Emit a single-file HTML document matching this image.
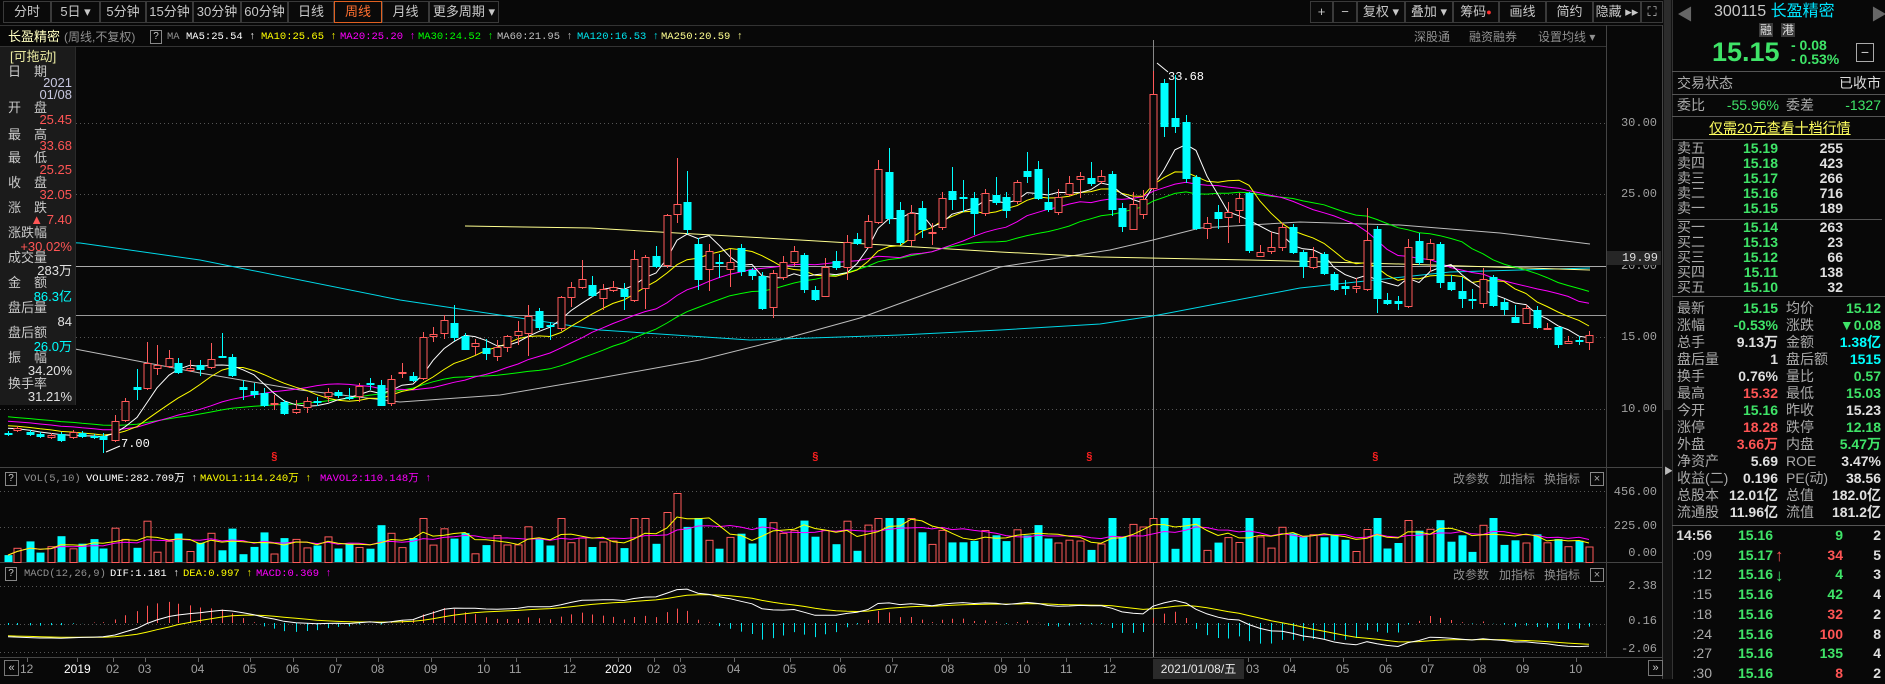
<!DOCTYPE html>
<html><head><meta charset="utf-8">
<style>
*{margin:0;padding:0;box-sizing:border-box}
body{width:1885px;height:679px;background:#080808;overflow:hidden;position:relative;font-family:"Liberation Sans","Noto Sans CJK SC",sans-serif;color:#c8c8c8}
.a{position:absolute;white-space:nowrap;line-height:16px}
.m{font-family:"Liberation Mono","Noto Sans CJK SC",monospace}
.btn{position:absolute;top:1px;height:22px;border:1px solid #3a3a3a;font-size:13px;line-height:20px;text-align:center;color:#c8c8c8;background:#0a0a0a}
.lp{font-size:13px}
.r{color:#ff5555}.g{color:#3fe468}.w{color:#e0e0e0}.c{color:#00ffff}.y{color:#ffff00}
.rp{font-size:14px}
.hl{position:absolute;height:1px;background:#555}
</style></head><body>
<svg id="cv" width="1885" height="679" style="position:absolute;left:0;top:0"></svg>

<!-- toolbar -->
<div class="btn" style="left:3px;width:48px">分时</div>
<div class="btn" style="left:51px;width:49px">5日 ▾</div>
<div class="btn" style="left:100px;width:46px">5分钟</div>
<div class="btn" style="left:146px;width:47px">15分钟</div>
<div class="btn" style="left:193px;width:48px">30分钟</div>
<div class="btn" style="left:241px;width:47px">60分钟</div>
<div class="btn" style="left:288px;width:46px">日线</div>
<div class="btn" style="left:334px;width:48px;border-color:#e06020;color:#ff7030">周线</div>
<div class="btn" style="left:382px;width:47px">月线</div>
<div class="btn" style="left:429px;width:70px">更多周期 ▾</div>

<div class="btn" style="left:1310px;width:23px">+</div>
<div class="btn" style="left:1333px;width:24px">−</div>
<div class="btn" style="left:1357px;width:48px">复权 ▾</div>
<div class="btn" style="left:1405px;width:48px">叠加 ▾</div>
<div class="btn" style="left:1453px;width:46px">筹码<span style="color:#ff3030;font-size:9px;vertical-align:top">●</span></div>
<div class="btn" style="left:1499px;width:47px">画线</div>
<div class="btn" style="left:1546px;width:47px">简约</div>
<div class="btn" style="left:1593px;width:48px">隐藏 ▸▸</div>
<div class="btn" style="left:1641px;width:22px">⛶</div>

<!-- info row -->
<div class="a" style="left:8px;top:29px;font-size:13px;color:#ffffc0">长盈精密</div>
<div class="a" style="left:64px;top:29px;font-size:12px;color:#909090">(周线,不复权)</div>
<div class="a" style="left:150px;top:30px;width:12px;height:14px;border:1px solid #888;font-size:10px;line-height:12px;text-align:center;color:#ccc">?</div>
<div class="a m" style="left:167px;top:29px;font-size:10.5px;color:#909090">MA</div>
<div class="a m" style="left:186px;top:29px;font-size:10.5px;color:#fff">MA5:25.54 ↑</div>
<div class="a m" style="left:261px;top:29px;font-size:10.5px;color:#ffff00">MA10:25.65 ↑</div>
<div class="a m" style="left:340px;top:29px;font-size:10.5px;color:#ff00ff">MA20:25.20 ↑</div>
<div class="a m" style="left:418px;top:29px;font-size:10.5px;color:#00ff00">MA30:24.52 ↑</div>
<div class="a m" style="left:497px;top:29px;font-size:10.5px;color:#c0c0c0">MA60:21.95 ↑</div>
<div class="a m" style="left:577px;top:29px;font-size:10.5px;color:#00e5ee">MA120:16.53 ↑</div>
<div class="a m" style="left:661px;top:29px;font-size:10.5px;color:#ffff90">MA250:20.59 ↑</div>
<div class="a" style="left:1414px;top:29px;font-size:12px;color:#909090">深股通</div>
<div class="a" style="left:1469px;top:29px;font-size:12px;color:#909090">融资融券</div>
<div class="a" style="left:1538px;top:29px;font-size:12px;color:#909090">设置均线 ▾</div>

<!-- left info panel -->
<div class="a" style="left:0;top:47px;width:76px;height:358px;background:#1b1b1b;border-right:1px solid #2a2a2a"></div>
<div class="a lp" style="left:10px;top:49px;color:#e8e8a0">[可拖动]</div>
<div class="a lp" style="left:8px;top:64px">日　期</div>
<div class="a lp" style="right:1813px;top:75px;color:#c8c8e0">2021</div>
<div class="a lp" style="right:1813px;top:87px;color:#c8c8e0">01/08</div>
<div class="a lp" style="left:8px;top:100px">开　盘</div>
<div class="a lp r" style="right:1813px;top:112px">25.45</div>
<div class="a lp" style="left:8px;top:127px">最　高</div>
<div class="a lp r" style="right:1813px;top:138px">33.68</div>
<div class="a lp" style="left:8px;top:150px">最　低</div>
<div class="a lp r" style="right:1813px;top:162px">25.25</div>
<div class="a lp" style="left:8px;top:175px">收　盘</div>
<div class="a lp r" style="right:1813px;top:187px">32.05</div>
<div class="a lp" style="left:8px;top:200px">涨　跌</div>
<div class="a lp r" style="right:1813px;top:212px">▲ 7.40</div>
<div class="a lp" style="left:8px;top:225px">涨跌幅</div>
<div class="a lp r" style="right:1813px;top:239px">+30.02%</div>
<div class="a lp" style="left:8px;top:250px">成交量</div>
<div class="a lp w" style="right:1813px;top:263px">283万</div>
<div class="a lp" style="left:8px;top:275px">金　额</div>
<div class="a lp c" style="right:1813px;top:289px">86.3亿</div>
<div class="a lp" style="left:8px;top:300px">盘后量</div>
<div class="a lp w" style="right:1813px;top:314px">84</div>
<div class="a lp" style="left:8px;top:325px">盘后额</div>
<div class="a lp c" style="right:1813px;top:339px">26.0万</div>
<div class="a lp" style="left:8px;top:350px">振　幅</div>
<div class="a lp w" style="right:1813px;top:363px">34.20%</div>
<div class="a lp" style="left:8px;top:376px">换手率</div>
<div class="a lp w" style="right:1813px;top:389px">31.21%</div>

<!-- chart labels -->
<div class="a m" style="left:1168px;top:69px;font-size:12px;color:#fff">33.68</div>
<div class="a m" style="left:121px;top:436px;font-size:12px;color:#fff">7.00</div>
<div class="a m" style="left:271px;top:450px;font-size:11px;color:#ff2020;font-weight:bold">§</div>
<div class="a m" style="left:812px;top:450px;font-size:11px;color:#ff2020;font-weight:bold">§</div>
<div class="a m" style="left:1086px;top:450px;font-size:11px;color:#ff2020;font-weight:bold">§</div>
<div class="a m" style="left:1372px;top:450px;font-size:11px;color:#ff2020;font-weight:bold">§</div>

<!-- price axis -->
<div class="a m" style="right:228px;top:115px;font-size:12px;color:#a0a0a0">30.00</div>
<div class="a m" style="right:228px;top:186px;font-size:12px;color:#a0a0a0">25.00</div>
<div class="a m" style="right:228px;top:258px;font-size:12px;color:#a0a0a0">20.00</div>
<div class="a m" style="left:1607px;top:251px;width:54px;height:14px;background:#262626;font-size:12px;line-height:14px;text-align:right;padding-right:3px;color:#e0e0e0">19.99</div>
<div class="a m" style="right:228px;top:329px;font-size:12px;color:#a0a0a0">15.00</div>
<div class="a m" style="right:228px;top:401px;font-size:12px;color:#a0a0a0">10.00</div>
<div class="a m" style="right:228px;top:484px;font-size:12px;color:#a0a0a0">456.00</div>
<div class="a m" style="right:228px;top:518px;font-size:12px;color:#a0a0a0">225.00</div>
<div class="a m" style="right:228px;top:545px;font-size:12px;color:#a0a0a0">0.00</div>
<div class="a m" style="right:228px;top:578px;font-size:12px;color:#a0a0a0">2.38</div>
<div class="a m" style="right:228px;top:613px;font-size:12px;color:#a0a0a0">0.16</div>
<div class="a m" style="right:228px;top:641px;font-size:12px;color:#a0a0a0">-2.06</div>

<!-- volume header -->
<div class="a" style="left:5px;top:472px;width:12px;height:14px;border:1px solid #888;font-size:10px;line-height:12px;text-align:center;color:#ccc">?</div>
<div class="a m" style="left:24px;top:471px;font-size:10.5px;color:#909090">VOL(5,10)</div>
<div class="a m" style="left:86px;top:471px;font-size:10.5px;color:#fff">VOLUME:282.709万 ↑</div>
<div class="a m" style="left:200px;top:471px;font-size:10.5px;color:#ffff00">MAVOL1:114.240万 ↑</div>
<div class="a m" style="left:320px;top:471px;font-size:10.5px;color:#ff00ff">MAVOL2:110.148万 ↑</div>
<div class="a" style="left:1453px;top:471px;font-size:12px;color:#909090">改参数</div>
<div class="a" style="left:1499px;top:471px;font-size:12px;color:#909090">加指标</div>
<div class="a" style="left:1544px;top:471px;font-size:12px;color:#909090">换指标</div>
<div class="a" style="left:1590px;top:472px;width:14px;height:14px;border:1px solid #888;font-size:11px;line-height:12px;text-align:center;color:#aaa">×</div>
<!-- macd header -->
<div class="a" style="left:5px;top:567px;width:12px;height:14px;border:1px solid #888;font-size:10px;line-height:12px;text-align:center;color:#ccc">?</div>
<div class="a m" style="left:24px;top:566px;font-size:10.5px;color:#909090">MACD(12,26,9)</div>
<div class="a m" style="left:110px;top:566px;font-size:10.5px;color:#fff">DIF:1.181 ↑</div>
<div class="a m" style="left:183px;top:566px;font-size:10.5px;color:#ffff00">DEA:0.997 ↑</div>
<div class="a m" style="left:256px;top:566px;font-size:10.5px;color:#ff00ff">MACD:0.369 ↑</div>
<div class="a" style="left:1453px;top:567px;font-size:12px;color:#909090">改参数</div>
<div class="a" style="left:1499px;top:567px;font-size:12px;color:#909090">加指标</div>
<div class="a" style="left:1544px;top:567px;font-size:12px;color:#909090">换指标</div>
<div class="a" style="left:1590px;top:568px;width:14px;height:14px;border:1px solid #888;font-size:11px;line-height:12px;text-align:center;color:#aaa">×</div>

<!-- date axis -->
<div class="a" style="left:4px;top:660px;width:15px;height:16px;border:1px solid #777;font-size:11px;line-height:14px;text-align:center;color:#ccc">«</div>
<div class="a" style="left:1648px;top:660px;width:15px;height:16px;border:1px solid #777;font-size:11px;line-height:14px;text-align:center;color:#ccc">»</div>
<div class="a" style="left:20px;top:661px;font-size:12px;color:#a0a0a0">12</div>
<div class="a" style="left:64px;top:661px;font-size:12px;color:#fff">2019</div>
<div class="a" style="left:106px;top:661px;font-size:12px;color:#a0a0a0">02</div>
<div class="a" style="left:138px;top:661px;font-size:12px;color:#a0a0a0">03</div>
<div class="a" style="left:191px;top:661px;font-size:12px;color:#a0a0a0">04</div>
<div class="a" style="left:243px;top:661px;font-size:12px;color:#a0a0a0">05</div>
<div class="a" style="left:286px;top:661px;font-size:12px;color:#a0a0a0">06</div>
<div class="a" style="left:329px;top:661px;font-size:12px;color:#a0a0a0">07</div>
<div class="a" style="left:371px;top:661px;font-size:12px;color:#a0a0a0">08</div>
<div class="a" style="left:424px;top:661px;font-size:12px;color:#a0a0a0">09</div>
<div class="a" style="left:477px;top:661px;font-size:12px;color:#a0a0a0">10</div>
<div class="a" style="left:509px;top:661px;font-size:12px;color:#a0a0a0">11</div>
<div class="a" style="left:563px;top:661px;font-size:12px;color:#a0a0a0">12</div>
<div class="a" style="left:605px;top:661px;font-size:12px;color:#fff">2020</div>
<div class="a" style="left:647px;top:661px;font-size:12px;color:#a0a0a0">02</div>
<div class="a" style="left:673px;top:661px;font-size:12px;color:#a0a0a0">03</div>
<div class="a" style="left:727px;top:661px;font-size:12px;color:#a0a0a0">04</div>
<div class="a" style="left:783px;top:661px;font-size:12px;color:#a0a0a0">05</div>
<div class="a" style="left:833px;top:661px;font-size:12px;color:#a0a0a0">06</div>
<div class="a" style="left:885px;top:661px;font-size:12px;color:#a0a0a0">07</div>
<div class="a" style="left:941px;top:661px;font-size:12px;color:#a0a0a0">08</div>
<div class="a" style="left:994px;top:661px;font-size:12px;color:#a0a0a0">09</div>
<div class="a" style="left:1017px;top:661px;font-size:12px;color:#a0a0a0">10</div>
<div class="a" style="left:1060px;top:661px;font-size:12px;color:#a0a0a0">11</div>
<div class="a" style="left:1103px;top:661px;font-size:12px;color:#a0a0a0">12</div>
<div class="a" style="left:1153px;top:659px;width:91px;height:20px;background:#2a2a2a;font-size:12px;line-height:20px;text-align:center;color:#e8e8e8">2021/01/08/五</div>
<div class="a" style="left:1246px;top:661px;font-size:12px;color:#a0a0a0">03</div>
<div class="a" style="left:1283px;top:661px;font-size:12px;color:#a0a0a0">04</div>
<div class="a" style="left:1336px;top:661px;font-size:12px;color:#a0a0a0">05</div>
<div class="a" style="left:1379px;top:661px;font-size:12px;color:#a0a0a0">06</div>
<div class="a" style="left:1421px;top:661px;font-size:12px;color:#a0a0a0">07</div>
<div class="a" style="left:1473px;top:661px;font-size:12px;color:#a0a0a0">08</div>
<div class="a" style="left:1516px;top:661px;font-size:12px;color:#a0a0a0">09</div>
<div class="a" style="left:1569px;top:661px;font-size:12px;color:#a0a0a0">10</div>

<!-- scrollbar -->
<div class="a" style="left:1663px;top:0;width:9px;height:679px;background:#121212"></div>
<div class="a" style="left:1664px;top:0;width:7px;height:410px;background:#2c2c2c"></div>
<div class="a" style="left:1664px;top:463px;font-size:9px;color:#bbb">▶</div>

<!-- right panel -->
<div class="a" style="left:1672px;top:0;width:1px;height:679px;background:#333"></div>
<div class="a" style="left:1677px;top:8px;font-size:16px;color:#666">◀</div>
<div class="a" style="left:1871px;top:8px;font-size:16px;color:#666">▶</div>
<div class="a" style="left:1714px;top:4px;font-size:16px;color:#c8c8c8">300115 <span style="color:#00e5ff">长盈精密</span></div>
<div class="a" style="left:1759px;top:23px;width:14px;height:14px;background:#3a3a3a;font-size:12px;line-height:14px;text-align:center;color:#ddd">融</div>
<div class="a" style="left:1781px;top:23px;width:14px;height:14px;background:#3a3a3a;font-size:12px;line-height:14px;text-align:center;color:#ddd">港</div>
<div class="a g" style="left:1712px;top:39px;font-size:27px;line-height:26px;font-weight:bold">15.15</div>
<div class="a g" style="left:1791px;top:37px;font-size:14px;font-weight:bold">- 0.08</div>
<div class="a g" style="left:1791px;top:51px;font-size:14px;font-weight:bold">- 0.53%</div>
<div class="a" style="left:1856px;top:43px;width:18px;height:19px;border:1px solid #aaa;font-size:14px;line-height:16px;text-align:center;color:#ccc">−</div>
<div class="hl" style="left:1672px;top:71px;width:213px"></div>
<div class="a rp" style="left:1677px;top:75px;color:#aaa">交易状态</div>
<div class="a rp" style="right:4px;top:75px;color:#ddd">已收市</div>
<div class="hl" style="left:1672px;top:94px;width:213px"></div>
<div class="a rp" style="left:1677px;top:97px;color:#aaa">委比</div>
<div class="a rp g" style="right:106px;top:97px">-55.96%</div>
<div class="a rp" style="left:1786px;top:97px;color:#aaa">委差</div>
<div class="a rp g" style="right:4px;top:97px">-1327</div>
<div class="hl" style="left:1672px;top:116px;width:213px"></div>
<div class="a rp" style="left:1709px;top:120px;color:#ffff60;text-decoration:underline">仅需20元查看十档行情</div>
<div class="hl" style="left:1672px;top:139px;width:213px"></div>
<div class="a rp" style="left:1677px;top:141px;color:#aaa;line-height:15px">卖五<br>卖四<br>卖三<br>卖二<br>卖一</div>
<div class="a rp g" style="right:107px;top:141px;line-height:15px;text-align:right;font-weight:bold">15.19<br>15.18<br>15.17<br>15.16<br>15.15</div>
<div class="a rp w" style="right:42px;top:141px;line-height:15px;text-align:right;font-weight:bold">255<br>423<br>266<br>716<br>189</div>
<div class="hl" style="left:1677px;top:219px;width:205px"></div>
<div class="a rp" style="left:1677px;top:220px;color:#aaa;line-height:15px">买一<br>买二<br>买三<br>买四<br>买五</div>
<div class="a rp g" style="right:107px;top:220px;line-height:15px;text-align:right;font-weight:bold">15.14<br>15.13<br>15.12<br>15.11<br>15.10</div>
<div class="a rp w" style="right:42px;top:220px;line-height:15px;text-align:right;font-weight:bold">263<br>23<br>66<br>138<br>32</div>
<div class="hl" style="left:1672px;top:296px;width:213px"></div>
<div class="a rp" style="left:1677px;top:300px;color:#aaa;line-height:17px">最新<br>涨幅<br>总手<br>盘后量<br>换手<br>最高<br>今开<br>涨停<br>外盘<br>净资产<br>收益(二)<br>总股本<br>流通股</div>
<div class="a rp" style="right:107px;top:300px;line-height:17px;text-align:right;font-weight:bold"><span class="g">15.15</span><br><span class="g">-0.53%</span><br><span class="w">9.13万</span><br><span class="w">1</span><br><span class="w">0.76%</span><br><span class="r">15.32</span><br><span class="g">15.16</span><br><span class="r">18.28</span><br><span class="r">3.66万</span><br><span class="w">5.69</span><br><span class="w">0.196</span><br><span class="w">12.01亿</span><br><span class="w">11.96亿</span></div>
<div class="a rp" style="left:1786px;top:300px;color:#aaa;line-height:17px">均价<br>涨跌<br>金额<br>盘后额<br>量比<br>最低<br>昨收<br>跌停<br>内盘<br>ROE<br>PE(动)<br>总值<br>流值</div>
<div class="a rp" style="right:4px;top:300px;line-height:17px;text-align:right;font-weight:bold"><span class="g">15.12</span><br><span class="g">▼0.08</span><br><span class="c">1.38亿</span><br><span class="c">1515</span><br><span class="g">0.57</span><br><span class="g">15.03</span><br><span class="w">15.23</span><br><span class="g">12.18</span><br><span class="g">5.47万</span><br><span class="w">3.47%</span><br><span class="w">38.56</span><br><span class="w">182.0亿</span><br><span class="w">181.2亿</span></div>
<div class="hl" style="left:1672px;top:525px;width:213px"></div>
<div class="a rp" style="right:173px;top:526px;line-height:19.7px;text-align:right;color:#aaa"><b style="color:#ddd">14:56</b><br>:09<br>:12<br>:15<br>:18<br>:24<br>:27<br>:30</div>
<div class="a rp g" style="right:112px;top:526px;line-height:19.7px;text-align:right;font-weight:bold">15.16<br>15.17<br>15.16<br>15.16<br>15.16<br>15.16<br>15.16<br>15.16</div>
<div class="a" style="left:1775px;top:546px;line-height:19.7px;font-size:17px;font-weight:bold"><span class="r">↑</span><br><span class="g">↓</span></div>
<div class="a rp" style="right:42px;top:526px;line-height:19.7px;text-align:right;font-weight:bold"><span class="g">9</span><br><span class="r">34</span><br><span class="g">4</span><br><span class="g">42</span><br><span class="r">32</span><br><span class="r">100</span><br><span class="g">135</span><br><span class="r">8</span></div>
<div class="a rp w" style="right:4px;top:526px;line-height:19.7px;text-align:right;font-weight:bold">2<br>5<br>3<br>4<br>2<br>8<br>4<br>2</div>

<script>
var C=[[8,433,434,'c'],[17,428,430,'r'],[30,432,434,'c'],[40,434,436,'c'],[51,435,437,'r'],[61,434,440,'c'],[73,432,437,'r'],[82,433,436,'c'],[94,436,437,'c'],[103,436,439,'c',433,453],
[115,421,440,'r',415],[125,401,420,'r',398],[137,387,389,'c',369,400],[147,363,388,'r',342],[157,365,368,'r',345,375],[169,358,366,'r',350],[178,363,372,'c',358],[190,368,370,'r',360],[200,365,369,'c',360,376],[211,359,367,'r',343],[222,356,357,'c',333,357],[232,357,375,'c',354],[243,387,389,'c',380,400],[254,391,394,'c',383,398],[264,393,405,'c',388],[274,403,404,'r',395,410],[284,402,413,'c',400,415],[296,409,412,'r',400],[307,401,407,'r',397,413],[317,401,402,'c',397,406],[328,392,396,'r',388,402],[338,392,395,'c',390,398],[349,397,398,'c',388,400],[359,386,396,'r',383,402],[370,383,384,'c',378,390],[381,385,405,'c',380,406],[391,379,403,'r',375,406],[402,372,373,'r',363,378],[413,376,380,'c',372],[423,337,378,'r',332],[433,334,336,'r',327,342],[444,320,333,'r',315,339],[454,323,337,'c',305,341],[465,336,349,'c',333,350],[475,343,346,'r',339,355],[486,348,353,'c',339,360],[497,347,356,'r',340,361],[507,336,347,'r',335,352],[518,331,335,'r',321,345],[528,316,333,'r',305,356],[539,311,327,'c',308,330],[550,325,326,'c',322,340],[561,297,328,'r',296,331],[571,287,297,'r',282,307],[582,279,287,'r',260,289],[592,285,295,'c',276],[603,289,298,'r',284,310],[613,287,290,'r',281,292],[624,289,296,'c',283,310],[634,259,300,'r',250,302],[645,257,288,'r',255,309],[656,256,266,'c',246,268],[667,215,265,'r',214,268],[677,204,214,'r',158,223],[687,202,229,'c',171,234],[698,244,279,'c',238,290],[709,251,269,'r',244,291],[719,262,263,'c',254,278],[730,262,269,'r',249,287],[741,248,271,'c',244,276],[752,270,275,'c',268,280],[762,276,308,'c',272,310],[773,273,307,'r',270,318],[783,262,277,'r',256,280],[794,251,262,'r',246,266],[804,255,289,'c',253,293],[815,290,299,'c',286,301],[825,267,296,'r',258,297],[836,261,267,'c',251,270],[847,242,267,'r',235,280],[857,239,243,'c',233,245],[868,221,247,'r',215,248],[878,169,222,'r',160],[889,172,218,'c',148,224],[900,210,242,'c',202,245],[911,213,240,'r',205,246],[922,208,229,'c',201,238],[932,232,233,'r',223,245],[942,198,227,'r',192,230],[952,191,199,'c',167,210],[963,197,198,'c',180,212],[974,198,213,'c',192,235],[985,193,213,'r',189,216],[996,195,202,'c',177,205],[1006,197,210,'c',192,218],[1017,182,201,'r',180,204],[1027,171,176,'c',152,183],[1038,169,198,'c',161,200],[1048,202,209,'c',178,212],[1058,197,212,'r',189,215],[1069,183,194,'r',176,196],[1080,176,179,'r',172,198],[1091,178,183,'c',162,186],[1101,176,181,'r',170,184],[1112,174,209,'c',171,216],[1122,208,226,'c',203,232],[1133,204,229,'r',192,230],[1143,199,214,'r',190,219],[1153,94,188,'r',71,190],
[1164,83,126,'c',79,137],[1175,118,126,'c',75,133],[1186,122,178,'c',115,183],[1196,177,228,'c',175,230],[1207,223,228,'r',217,239],[1218,212,218,'c',205,229],[1228,212,217,'r',202,243],[1239,198,210,'r',193,223],[1249,193,250,'c',192,253],[1260,252,256,'r',245,257],[1271,247,251,'r',232,254],[1282,227,247,'r',223,251],[1293,227,252,'c',224,254],[1303,252,266,'c',250,278],[1313,257,267,'r',247,269],[1324,254,273,'c',252,275],[1334,274,289,'c',272,291],[1345,286,288,'c',280,295],[1356,286,288,'r',278,293],[1367,240,289,'r',208,291],[1377,229,298,'c',226,313],[1387,300,303,'c',293,305],[1398,301,303,'c',296,310],[1408,247,306,'r',239,308],[1419,241,262,'c',233,265],[1430,243,259,'r',239,272],[1440,244,282,'c',242,288],[1451,282,289,'c',275,291],[1462,291,298,'c',277,308],[1472,299,300,'c',289,309],[1483,279,303,'r',268,308],[1493,277,305,'c',275,307],[1504,302,309,'c',299,315],[1515,317,322,'c',305,323],[1526,308,323,'r',305,324],[1537,310,327,'c',306,329],[1547,328,329,'r',323,330],[1558,327,344,'c',327,348],[1568,341,343,'r',336,344],[1579,340,341,'c',336,345],[1589,335,342,'r',331,350]];
var s='';
function ln(x1,y1,x2,y2,c,w,d){s+='<line x1="'+x1+'" y1="'+y1+'" x2="'+x2+'" y2="'+y2+'" stroke="'+c+'" stroke-width="'+(w||1)+'"'+(d?' stroke-dasharray="'+d+'"':'')+'/>';}
function pl(pts,c,w){s+='<polyline fill="none" stroke="'+c+'" stroke-width="'+(w||1)+'" points="'+pts.map(function(p){return p[0]+','+p[1].toFixed(1)}).join(' ')+'"/>';}
ln(0,25.5,1663,25.5,'#333');ln(0,46.5,1606,46.5,'#333');
ln(1606.5,25,1606.5,658,'#444');ln(0,467.5,1663,467.5,'#444');ln(0,562.5,1663,562.5,'#444');ln(0,657.5,1663,657.5,'#444');
ln(1662.5,25,1662.5,679,'#444');
[123,194,337,409].forEach(function(y){ln(0,y+.5,1606,y+.5,'#555',1,'1,3');});
[491,527].forEach(function(y){ln(0,y+.5,1606,y+.5,'#555',1,'1,3');});
[586,624,652].forEach(function(y){ln(0,y+.5,1606,y+.5,'#555',1,'1,3');});
ln(0,266.5,1606,266.5,'#aaa');ln(0,315.5,1606,315.5,'#999');
ln(1153.5,40,1153.5,657,'#888');
pl([[0,340],[75,349],[200,373],[300,390],[400,402],[500,395],[600,378],[700,360],[780,340],[860,318],[1000,267],[1110,250],[1153,240],[1200,228],[1300,222],[1400,225],[1500,233],[1590,244]],'#bdbdbd');
pl([[0,240],[80,243],[200,260],[400,300],[600,330],[750,340],[900,335],[1000,330],[1100,324],[1153,316],[1300,288],[1450,272],[1590,268]],'#00d8e8');
pl([[465,226],[590,228],[800,240],[1000,252],[1100,257],[1250,260],[1400,264],[1590,270]],'#ffff90');
var cl=C.map(function(c){return c[3]=='r'?c[1]:c[2];});
var pad=[];for(var i=0;i<40;i++)pad.push(395+i*0.85);
var all=pad.concat(cl);
function ma(n){var r=[];for(var i=0;i<C.length;i++){var k=i+40,t=0;for(var j=k-n+1;j<=k;j++)t+=all[j];r.push([C[i][0],t/n]);}return r;}
pl(ma(30),'#00ff00');pl(ma(20),'#ff00ff');pl(ma(10),'#ffff00');pl(ma(5),'#ffffff');
C.forEach(function(c){var x=c[0]+.5,t=c[1],b=c[2],wt=c[4]||t-2,wb=c[5]||b+2,h=Math.max(b-t,1);
 if(c[3]=='r'){ln(x,wt,x,t,'#ff5a5a');ln(x,b,x,wb,'#ff5a5a');s+='<rect x="'+(c[0]-3)+'" y="'+(t+.5)+'" width="7" height="'+h+'" fill="#080808" stroke="#ff5a5a"/>';}
 else{ln(x,wt,x,wb,'#00ffff');s+='<rect x="'+(c[0]-3.5)+'" y="'+t+'" width="8" height="'+(h+1)+'" fill="#00ffff"/>';}
});
ln(1157,63,1168,72,'#fff');ln(106,452,120,446,'#fff');
var V=C.map(function(c,i){var h=6+(c[2]-c[1])*0.9+((i*37)%11)*1.6;return Math.min(h,44);});
C.forEach(function(c,i){if(c[0]==677)V[i]=69;if(c[0]==667)V[i]=50;if(c[0]==1153)V[i]=44;if(c[0]==1408)V[i]=42;if(c[0]==1367)V[i]=33;});
C.forEach(function(c,i){var h=V[i];if(c[3]=='r')s+='<rect x="'+(c[0]-3)+'" y="'+(562-h+.5)+'" width="7" height="'+h+'" fill="#080808" stroke="#ff5a5a"/>';else s+='<rect x="'+(c[0]-3.5)+'" y="'+(562-h)+'" width="8" height="'+h+'" fill="#00ffff"/>';});
function vma(n){var r=[];for(var i=0;i<V.length;i++){var t=0,m=0;for(var j=Math.max(0,i-n+1);j<=i;j++){t+=V[j];m++;}r.push([C[i][0],562-t/m]);}return r;}
pl(vma(10),'#ff00ff');pl(vma(5),'#ffff00');
// macd with own declining history
var mp=[];for(var i=0;i<60;i++)mp.push(17-i*0.13);
var P=mp.concat(cl.map(function(y){return 15+(337-y)/14.3;}));
var e12=P[0],e26=P[0],dea=0,D=[],E=[];
for(var i=0;i<P.length;i++){e12=e12+(P[i]-e12)*2/13;e26=e26+(P[i]-e26)*2/27;var dif=e12-e26;dea=dea+(dif-dea)*2/10;if(i>=60){var x=C[i-60][0];D.push([x,Math.min(656,623-dif*14.2)]);E.push([x,Math.min(656,623-dea*14.2)]);var m=2*(dif-dea);ln(x+.5,623,x+.5,Math.max(590,Math.min(656,623-m*14.2)),m>=0?'#ff5050':'#00e5ee');}}
pl(E,'#ffff00');pl(D,'#ffffff');
[27,77,113,145,198,250,293,336,378,431,484,516,570,618,654,680,734,790,840,892,948,1001,1024,1066,1110,1248,1290,1343,1386,1428,1480,1523,1576].forEach(function(x){ln(x+.5,658,x+.5,662,'#666');});
document.getElementById('cv').innerHTML=s;
</script>
</body></html>
